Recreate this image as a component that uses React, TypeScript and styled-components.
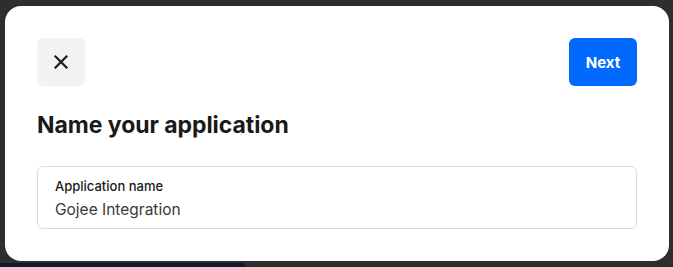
import React from "react";
import styled, { createGlobalStyle } from "styled-components";

const Global = createGlobalStyle`
  html, body { margin: 0; padding: 0; background: #2e2e2e; }
  body { font-family: Inter, "Noto Sans", sans-serif; width: 673px; height: 267px; overflow: hidden; }
`;

const Backdrop = styled.div`
  position: relative;
  width: 673px;
  height: 267px;
  background: #2e2e2e;
  padding: 6px 4px 0 5px;
  box-sizing: border-box;
`;

const BottomStrip = styled.div`
  position: absolute;
  left: 0;
  bottom: 0;
  width: 245px;
  height: 4px;
  background: #0b1a2e;
  border-top-right-radius: 4px;
`;

const Modal = styled.div`
  position: relative;
  z-index: 1;
  width: 664px;
  height: 255px;
  background: #ffffff;
  border-radius: 16px;
  padding: 32px;
  box-sizing: border-box;
  display: flex;
  flex-direction: column;
`;

const Header = styled.div`
  display: flex;
  justify-content: space-between;
  align-items: center;
  height: 48px;
`;

const CloseButton = styled.button`
  width: 48px;
  height: 48px;
  border: none;
  border-radius: 6px;
  background: #f2f2f2;
  display: flex;
  align-items: center;
  justify-content: center;
  padding: 0;
  cursor: pointer;
`;

const NextButton = styled.button`
  width: 68px;
  height: 48px;
  border: none;
  border-radius: 6px;
  background: #006aff;
  color: #ffffff;
  font-family: Inter, sans-serif;
  font-weight: 700;
  font-size: 15px;
  padding: 0;
  cursor: pointer;
`;

const Title = styled.h1`
  margin: 25px 0 0;
  font-family: Inter, sans-serif;
  font-size: 23px;
  line-height: 28px;
  font-weight: 700;
  color: #1a1a1a;
  letter-spacing: -0.05px;
`;

const Field = styled.div`
  margin-top: 27px;
  height: 64px;
  border: 1px solid #d9d9d9;
  border-radius: 6px;
  padding: 10px 17px 0;
  box-sizing: border-box;
  display: flex;
  flex-direction: column;
  gap: 3px;
`;

const Label = styled.label`
  font-family: Inter, sans-serif;
  font-size: 13px;
  line-height: 18px;
  font-weight: 500;
  color: #1a1a1a;
`;

const Value = styled.div`
  font-family: Inter, sans-serif;
  font-size: 15.5px;
  line-height: 24px;
  font-weight: 400;
  color: #3a3a3a;
`;

export default function App() {
  return (
    <>
      <Global />
      <Backdrop>
        <Modal>
          <Header>
            <CloseButton aria-label="Close">
              <svg width="14" height="14" viewBox="0 0 14 14">
                <path d="M1.5 1.5 L12.5 12.5 M12.5 1.5 L1.5 12.5" stroke="#1a1a1a" strokeWidth="2.2" strokeLinecap="square" />
              </svg>
            </CloseButton>
            <NextButton>Next</NextButton>
          </Header>
          <Title>Name your application</Title>
          <Field>
            <Label>Application name</Label>
            <Value>Gojee Integration</Value>
          </Field>
        </Modal>
        <BottomStrip />
      </Backdrop>
    </>
  );
}
